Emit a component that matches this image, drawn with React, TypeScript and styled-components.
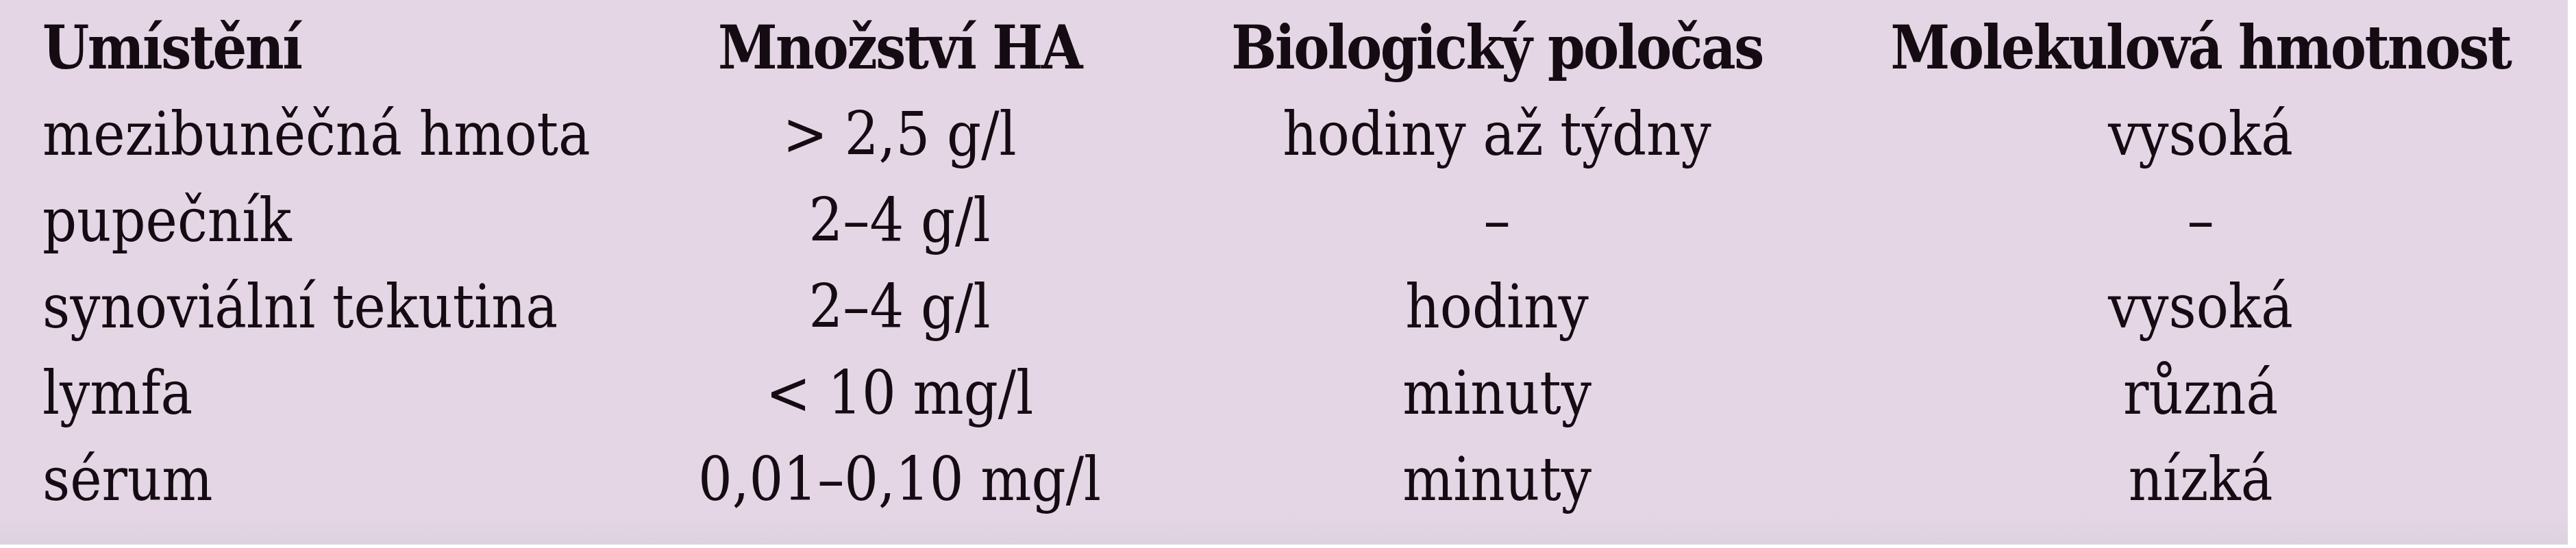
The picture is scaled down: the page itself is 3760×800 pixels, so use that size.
import React from "react";
import styled, { createGlobalStyle } from "styled-components";

const Global = createGlobalStyle`
  html, body {
    margin: 0;
    padding: 0;
    background: #ffffff;
  }
`;

const Panel = styled.div`
  width: 3748px;
  height: 795px;
  box-sizing: border-box;
  padding: 7px 0 0 62px;
  background: linear-gradient(to bottom, #e5d6e6 0%, #e5d6e6 94%, #ddd2df 100%);
  font-family: "DejaVu Serif", "Liberation Serif", serif;
  font-stretch: condensed;
  color: #140c12;
`;

const Grid = styled.div`
  display: grid;
  grid-template-columns: 951px 600px 1144px 910px;
  grid-auto-rows: 126px;
  align-items: center;
`;

const Cell = styled.div<{ $head?: boolean; $align?: "left" | "center" }>`
  font-size: 87px;
  line-height: 126px;
  font-weight: ${(p) => (p.$head ? 700 : 400)};
  letter-spacing: ${(p) => (p.$head ? "-2.5px" : "0")};
  text-align: ${(p) => p.$align ?? "center"};
  white-space: nowrap;
`;

const head = ["Umístění", "Množství HA", "Biologický poločas", "Molekulová hmotnost"];
const rows = [
  ["mezibuněčná hmota", "> 2,5 g/l", "hodiny až týdny", "vysoká"],
  ["pupečník", "2–4 g/l", "–", "–"],
  ["synoviální tekutina", "2–4 g/l", "hodiny", "vysoká"],
  ["lymfa", "< 10 mg/l", "minuty", "různá"],
  ["sérum", "0,01–0,10 mg/l", "minuty", "nízká"],
];

export default function App() {
  return (
    <>
      <Global />
      <Panel>
        <Grid>
          {head.map((h, i) => (
            <Cell key={h} $head $align={i === 0 ? "left" : "center"}>
              {h}
            </Cell>
          ))}
          {rows.map((r, ri) =>
            r.map((c, ci) => (
              <Cell key={`${ri}-${ci}`} $align={ci === 0 ? "left" : "center"}>
                {c}
              </Cell>
            ))
          )}
        </Grid>
      </Panel>
    </>
  );
}
